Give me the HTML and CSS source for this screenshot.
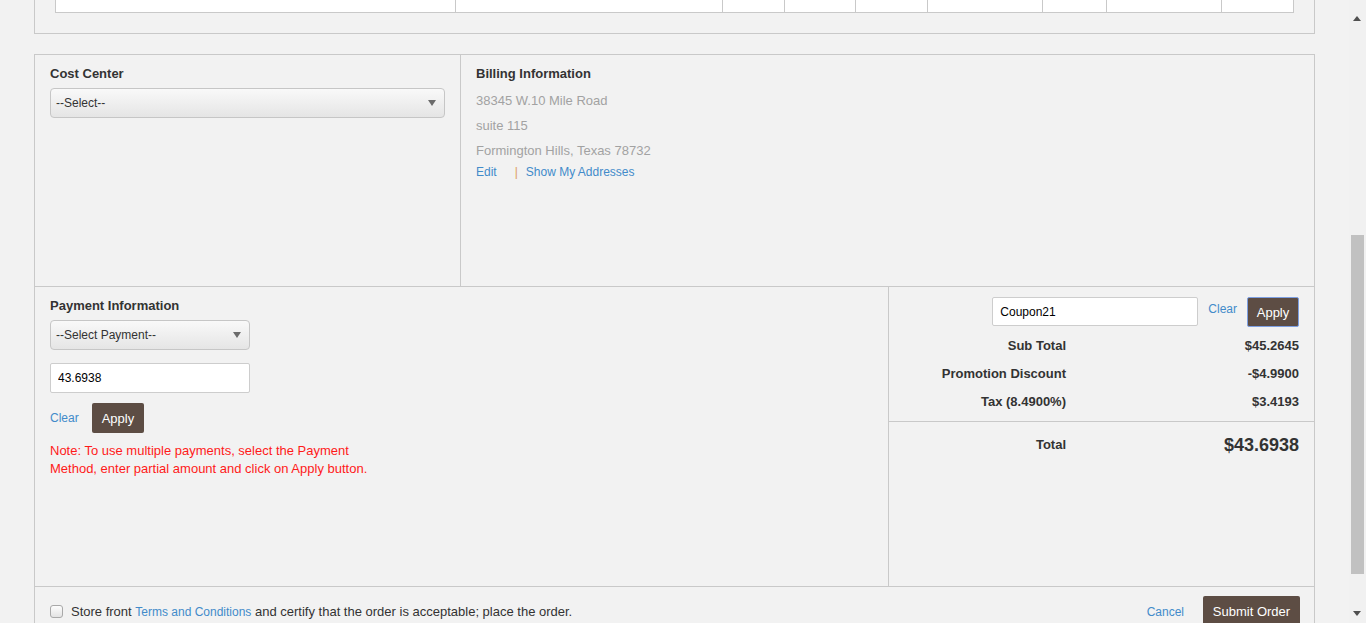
FILE: index.html
```html
<!DOCTYPE html>
<html lang="en">
<head>
<meta charset="utf-8">
<title>Checkout</title>
<link rel="stylesheet" href="styles.css">
</head>
<body>
<div class="page">
  <div class="panel-top">
    <div class="items">
      <div class="c"></div><div class="c"></div><div class="c"></div><div class="c"></div><div class="c"></div><div class="c"></div><div class="c"></div><div class="c"></div><div class="c"></div>
    </div>
  </div>

  <div class="panel-main">
    <div class="row row1">
      <div class="cell cost">
        <div class="label">Cost Center</div>
        <div class="select select-wide"><span>--Select--</span><svg class="caret" width="8" height="6" viewBox="0 0 8 6"><path d="M0 0H8L4 6Z"/></svg></div>
      </div>
      <div class="cell billing">
        <div class="label">Billing Information</div>
        <div class="addr">38345 W.10 Mile Road</div>
        <div class="addr">suite 115</div>
        <div class="addr">Formington Hills, Texas 78732</div>
        <div class="links"><a class="link edit" href="#">Edit</a><span class="sep">|</span><a class="link" href="#">Show My Addresses</a></div>
      </div>
    </div>

    <div class="row row2">
      <div class="cell payment">
        <div class="label">Payment Information</div>
        <div class="select select-narrow"><span>--Select Payment--</span><svg class="caret" width="8" height="6" viewBox="0 0 8 6"><path d="M0 0H8L4 6Z"/></svg></div>
        <input class="field amount" type="text" value="43.6938">
        <div class="actions">
          <a class="link clear" href="#">Clear</a>
          <button class="btn" type="button">Apply</button>
        </div>
        <p class="note">Note: To use multiple payments, select the Payment Method, enter partial amount and click on Apply button.</p>
      </div>
      <div class="cell totals">
        <div class="coupon">
          <input class="field coupon-field" type="text" value="Coupon21">
          <a class="link coupon-clear" href="#">Clear</a>
          <button class="btn btn-focus" type="button">Apply</button>
        </div>
        <div class="sums">
          <div class="k">Sub Total</div><div class="v">$45.2645</div>
          <div class="k">Promotion Discount</div><div class="v">-$4.9900</div>
          <div class="k">Tax (8.4900%)</div><div class="v">$3.4193</div>
        </div>
        <div class="grand">
          <div class="k">Total</div><div class="v big">$43.6938</div>
        </div>
      </div>
    </div>

    <div class="row row3">
      <label class="agree"><input class="check" type="checkbox"><span>Store front <a class="link terms" href="#">Terms and Conditions</a> and certify that the order is acceptable; place the order.</span></label>
      <div class="submit">
        <a class="link cancel" href="#">Cancel</a>
        <button class="btn btn-submit" type="button">Submit Order</button>
      </div>
    </div>
  </div>
</div>

<div class="scrollbar">
  <svg class="arrow arrow-up" width="8" height="5" viewBox="0 0 8 5"><path d="M4 0L8 5H0Z"/></svg>
  <div class="thumb"></div>
  <svg class="arrow arrow-down" width="8" height="5" viewBox="0 0 8 5"><path d="M0 0H8L4 5Z"/></svg>
</div>
</body>
</html>
```

FILE: styles.css
```css
html, body {
  margin: 0;
  padding: 0;
  overflow: hidden;
  height: 623px;
}
body {
  background: #f2f2f2;
  font-family: "Liberation Sans", Arial, sans-serif;
  color: #333;
}
* { box-sizing: border-box; }

.page {
  width: 1281px;
  margin-left: 34px;
}

/* top panel with table remnant */
.panel-top {
  border: 1px solid #c9c9c9;
  border-top: 0;
  padding: 0 20px 20px;
}
.items {
  display: grid;
  grid-template-columns: 400px 267px 62px 71px 72px 115px 64px 115px 72px;
  border-left: 1px solid #c9c9c9;
  border-bottom: 1px solid #c9c9c9;
}
.items .c {
  height: 12px;
  background: #fff;
  border-right: 1px solid #c9c9c9;
}

/* main panel */
.panel-main {
  margin-top: 20px;
  border: 1px solid #c9c9c9;
  border-bottom: 0;
}
.row {
  display: flex;
  border-bottom: 1px solid #c9c9c9;
}
.row1 { height: 232px; }
.row2 { height: 300px; }
.row3 {
  border-bottom: 0;
  justify-content: space-between;
  align-items: center;
  padding: 10px 14px 10px 14px;
}

.cell { padding: 10px 15px; }
.cost {
  width: 426px;
  border-right: 1px solid #c9c9c9;
}
.billing { flex: 1; }
.payment {
  width: 854px;
  border-right: 1px solid #c9c9c9;
}
.totals {
  flex: 1;
  padding: 10px 0 0;
}

.label {
  font-size: 13px;
  font-weight: bold;
  line-height: 18px;
  margin-bottom: 5px;
  color: #333;
}

.select {
  height: 30px;
  border: 1px solid #c6c6c6;
  border-radius: 4px;
  background: linear-gradient(#f9f9f9, #e5e5e5);
  display: flex;
  align-items: center;
  justify-content: space-between;
  padding: 0 8px 0 5px;
  font-size: 12px;
  color: #333;
}
.select-wide { width: 100%; }
.select-narrow { width: 200px; }
.caret { fill: #6b6b6b; }

.addr {
  font-size: 13px;
  line-height: 25px;
  color: #a2a2a2;
}
.links {
  font-size: 12px;
  line-height: 17px;
  padding-top: 1px;
}
.link {
  color: #428bca;
  text-decoration: none;
}
.edit { margin-right: 18px; }
.sep {
  color: #dca05e;
  margin-right: 8px;
}

.field {
  display: block;
  height: 30px;
  border: 1px solid #cdcdcd;
  border-radius: 2px;
  background: #fff;
  padding: 0 7px;
  font-family: "Liberation Sans", Arial, sans-serif;
  font-size: 12px;
  color: #000;
  outline: none;
}
.amount {
  width: 200px;
  margin: 13px 0 0;
}

.actions {
  margin-top: 10px;
  display: flex;
  align-items: center;
  font-size: 12px;
}
.clear { margin-right: 13px; }

.btn {
  height: 30px;
  border: 0;
  border-radius: 2px;
  background: #5d4d44;
  color: #fff;
  font-family: "Liberation Sans", Arial, sans-serif;
  font-size: 13px;
  padding: 0 10px;
  cursor: pointer;
}

.note {
  margin: 9px 0 0;
  max-width: 340px;
  font-size: 13px;
  line-height: 18px;
  color: #ff1a1a;
}

/* totals */
.coupon {
  display: flex;
  justify-content: flex-end;
  align-items: flex-start;
  padding-right: 15px;
  font-size: 12px;
}
.coupon-field {
  width: 206px;
  height: 29px;
  margin: 0 10px 0 0;
}
.coupon-clear {
  line-height: 25px;
  margin-right: 10px;
}
.btn-focus {
  width: 52px;
  padding: 0;
  border: 1px solid #7d9fe2;
}

.sums, .grand {
  display: grid;
  grid-template-columns: 177px 1fr;
  padding-right: 15px;
  font-size: 13px;
  font-weight: bold;
  color: #333;
}
.sums {
  margin-top: 5px;
  line-height: 28px;
  padding-bottom: 5px;
  border-bottom: 1px solid #c9c9c9;
}
.k { text-align: right; }
.v { text-align: right; }
.grand {
  padding-top: 12px;
  line-height: 22px;
}
.big { font-size: 18px; }

/* bottom */
.agree {
  display: flex;
  align-items: center;
  font-size: 13px;
  color: #333;
}
.terms { font-size: 12px; }
.check {
  appearance: none;
  -webkit-appearance: none;
  width: 13px;
  height: 13px;
  margin: 0 8px 0 1px;
  border: 1px solid #a9a9a9;
  border-radius: 3px;
  background: linear-gradient(#fdfdfd, #e3e3e3);
}
.submit {
  display: flex;
  align-items: center;
  font-size: 12px;
}
.cancel { margin-right: 19px; }
.btn-submit {
  width: 97px;
  padding: 0;
  margin-top: -1px;
}

/* window scrollbar overlay */
.scrollbar {
  position: fixed;
  top: 0;
  right: 0;
  width: 17px;
  height: 623px;
  background: #f1f1f1;
}
.thumb {
  position: absolute;
  left: 2px;
  top: 235px;
  width: 13px;
  height: 339px;
  background: #c1c1c1;
}
.arrow {
  position: absolute;
  left: 4px;
  fill: #505050;
}
.arrow-up { top: 16px; }
.arrow-down { top: 611px; }
```
